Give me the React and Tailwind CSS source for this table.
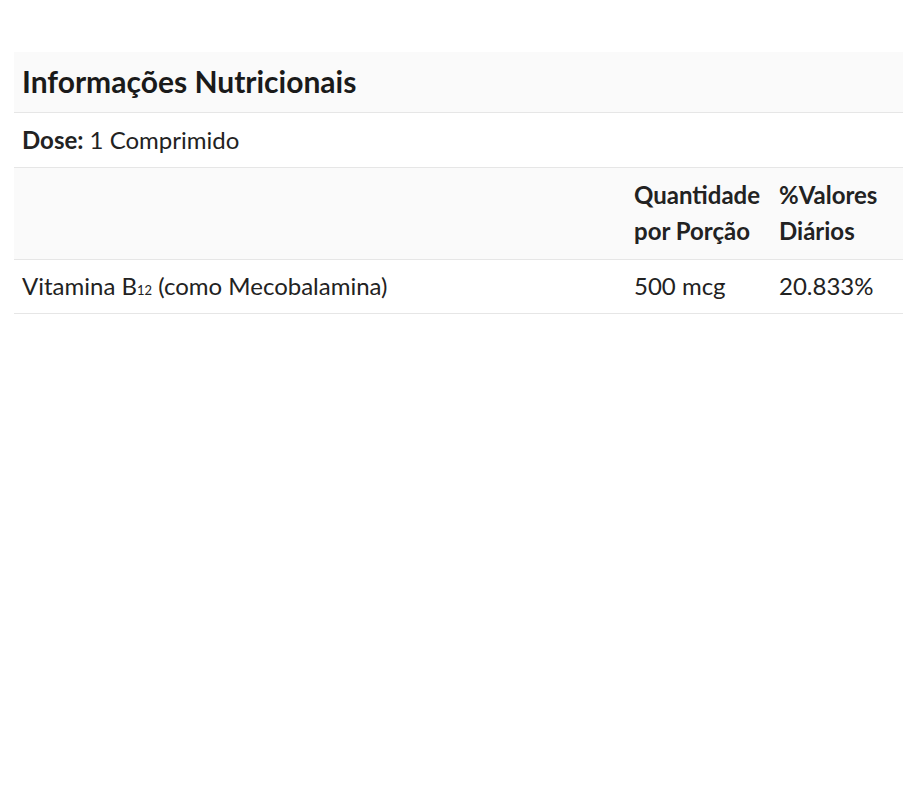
import React from 'react';

const App = () => {
  return (
    <div className="min-h-screen bg-white pt-[52px] px-[14px]" style={{ fontFamily: 'Lato, "Noto Sans", sans-serif' }}>
      <table className="w-[889px] border-collapse text-[24px] text-[#222]">
        <thead>
          <tr className="bg-[#fafafa] border-b border-[#e6e6e6]">
            <th colSpan={3} className="h-[60px] px-2 text-left text-[30px] font-bold text-[#1a1a1a]">
              Informações Nutricionais
            </th>
          </tr>
        </thead>
        <tbody>
          <tr className="border-b border-[#e6e6e6]">
            <td colSpan={3} className="h-[55px] px-2">
              <span className="font-bold">Dose:</span> 1 Comprimido
            </td>
          </tr>
          <tr className="bg-[#fafafa] border-b border-[#e6e6e6]">
            <td className="h-[92px] px-2"></td>
            <td className="w-[145px] px-2 font-bold leading-[36px]">Quantidade por Porção</td>
            <td className="w-[132px] px-2 font-bold leading-[36px]">%Valores Diários</td>
          </tr>
          <tr className="border-b border-[#e6e6e6]">
            <td className="h-[54px] px-2">
              Vitamina B<span className="text-[13px]">12</span> (como Mecobalamina)
            </td>
            <td className="px-2">500 mcg</td>
            <td className="px-2">20.833%</td>
          </tr>
        </tbody>
      </table>
    </div>
  );
};

export default App;
